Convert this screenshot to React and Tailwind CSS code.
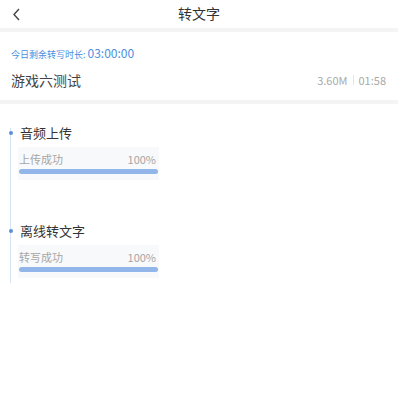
import React from "react";

const font = { fontFamily: '"Noto Sans CJK SC", "Noto Sans", sans-serif' };

function Step({ title, status }) {
  return (
    <div className="relative pl-[20px]">
      <div className="absolute left-[9px] top-[8px] w-[4px] h-[4px] rounded-full bg-[#5b8fd8]" />
      <div className="text-[13px] leading-[20px] text-[#333]">{title}</div>
      <div className="mt-[4px] w-[141px] -ml-[2px] bg-[#f8f9fb] px-[1px] pt-[5px] pb-[6px]">
        <div className="flex justify-between items-end text-[11px] leading-[14px] text-[#a6a6a6]">
          <span>{status}</span>
          <span className="pr-[2px]">100%</span>
        </div>
        <div className="mt-[3px] h-[5px] rounded-full bg-[#93b6ea]" />
      </div>
    </div>
  );
}

export default function App() {
  return (
    <div className="w-[416px] h-[406px] bg-white" style={font}>
      <div className="w-[398px]">
        <div className="relative h-[28px] flex items-center justify-center">
          <svg className="absolute left-[12px] top-[8px]" width="9" height="13" viewBox="0 0 9 13">
            <path d="M7 1 L2 6.5 L7 12" fill="none" stroke="#444" strokeWidth="1.4" />
          </svg>
          <span className="text-[14px] text-[#333] -mt-[1px]">转文字</span>
        </div>
        <div className="h-[4px] bg-[#f4f4f5]" />
        <div className="px-[11px] pt-[12px]">
          <div className="flex items-baseline text-[#4a8fe0]">
            <span className="text-[9px]">今日剩余转写时长:</span>
            <span className="text-[12px] ml-[2px]">03:00:00</span>
          </div>
          <div className="flex items-center justify-between mt-[8px] h-[20px]">
            <span className="text-[14px] text-[#444]">游戏六测试</span>
            <span className="flex items-center text-[11px] text-[#aaa] pr-[1px]">
              3.60M
              <span className="mx-[5px] w-px h-[10px] bg-[#e5e5e5]" />
              01:58
            </span>
          </div>
        </div>
        <div className="mt-[10px] h-[4px] bg-[#f4f4f5]" />
        <div className="relative mt-[16px] pt-[3px]">
          <div className="absolute left-[10px] top-[8px] h-[155px] w-px bg-[#d6e4f6]" />
          <Step title="音频上传" status="上传成功" />
          <div className="h-[41px]" />
          <Step title="离线转文字" status="转写成功" />
        </div>
      </div>
    </div>
  );
}
